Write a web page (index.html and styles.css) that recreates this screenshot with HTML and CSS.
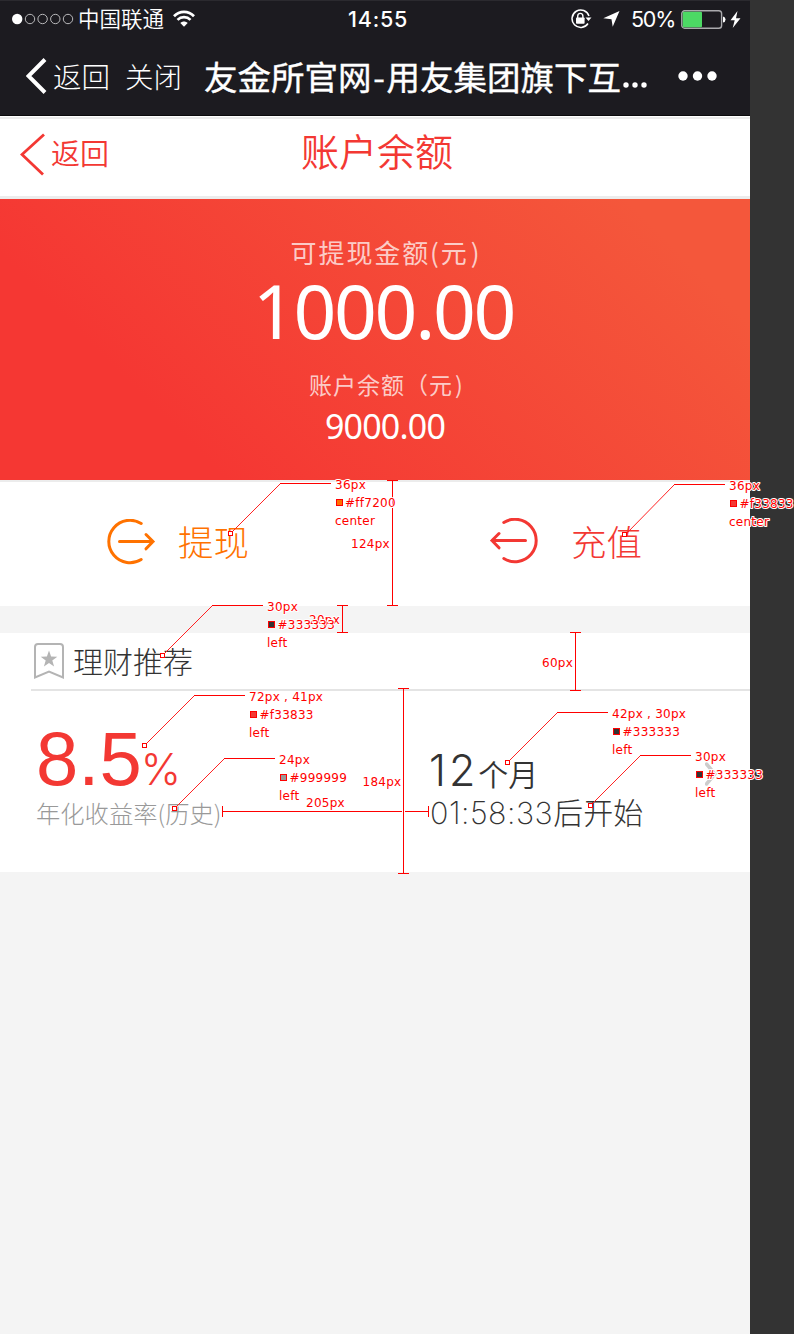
FILE: index.html
```html
<!DOCTYPE html>
<html lang="zh-CN">
<head>
<meta charset="utf-8">
<title>账户余额</title>
<link rel="stylesheet" href="styles.css">
</head>
<body>
<div class="board">
<main class="phone">
  <header class="topbar">
    <div class="status">
      <div class="status-left">
        <svg class="signal" width="62" height="12" viewBox="0 0 62 12"><circle cx="5.2" cy="6" r="5.2" fill="#fff"/><g fill="none" stroke="#b9b9bb" stroke-width="1"><circle cx="18" cy="6" r="4.7"/><circle cx="30.6" cy="6" r="4.7"/><circle cx="43.3" cy="6" r="4.7"/><circle cx="56" cy="6" r="4.7"/></g></svg>
        <span class="carrier">中国联通</span>
        <svg class="wifi" width="22" height="17" viewBox="0 0 22 17"><g fill="none" stroke="#fff" stroke-width="2.7"><path d="M1 6.2C6.5.5 15.500.5 21 6.200"/><path d="M4.500 9.900c3.600-3.600 9.400-3.600 13 0"/></g><path d="M7.300 13c2.200-2 5.200-2 7.400 0L11 16.800z" fill="#fff"/></svg>
      </div>
      <span class="clock">14:55</span>
      <div class="status-right">
        <svg class="lock" width="21" height="20" viewBox="0 0 21 20"><path d="M18 7A8.700 8.700 0 1 0 17 14.500" fill="none" stroke="#fff" stroke-width="1.500"/><path d="M14.500 8.500h6l-3 3.500z" fill="#fff"/><rect x="5" y="8.500" width="8.600" height="6.200" rx=".8" fill="#fff"/><path d="M6.700 9V7.200a2.600 2.800 0 0 1 5.200 0V9" fill="none" stroke="#fff" stroke-width="1.400"/></svg>
        <svg class="locate" width="17" height="16" viewBox="0 0 17 16"><path d="M16.500 0L9.700 15.800 8.500 8.300.300 7.200z" fill="#fff"/></svg>
        <span class="percent">50%</span>
        <svg class="battery" width="45" height="19" viewBox="0 0 45 19"><rect x=".8" y=".8" width="39.800" height="17.400" rx="2.800" fill="none" stroke="#aaaaad" stroke-width="1.400"/><rect x="1.800" y="1.800" width="19.200" height="15.400" rx="1" fill="#4cd964"/><path d="M42 6.500q2.500.5 2.500 3T42 12.500z" fill="#fff"/></svg>
        <svg class="bolt" width="11" height="17" viewBox="0 0 11 17"><path d="M7.500 0L.5 9.200h4.200L2.700 17 10.500 7.200H6z" fill="#fff"/></svg>
      </div>
    </div>
    <nav class="nav">
      <svg class="nav-arrow" width="21" height="36" viewBox="0 0 21 36"><path d="M19 1.500L2.500 18 19 34.500" fill="none" stroke="#fff" stroke-width="4"/></svg>
      <span class="nav-link">返回</span>
      <span class="nav-link nav-close">关闭</span>
      <h1 class="nav-title">友金所官网<i class="dash">-</i>用友集团旗下互</h1>
      <svg class="ellipsis" width="26" height="6" viewBox="0 0 26 6"><g fill="#fff"><circle cx="3" cy="3" r="2.700"/><circle cx="12" cy="3" r="2.700"/><circle cx="21" cy="3" r="2.700"/></g></svg>
      <svg class="more" width="40" height="10" viewBox="0 0 40 10"><g fill="#fff"><circle cx="5" cy="5" r="4.700"/><circle cx="19.500" cy="5" r="4.700"/><circle cx="34" cy="5" r="4.700"/></g></svg>
    </nav>
  </header>

  <section class="titlebar">
    <div class="back"><svg width="26" height="43" viewBox="0 0 26 43"><path d="M24 1.500L2 21.500 23 41.500" fill="none" stroke="#f33833" stroke-width="2.800"/></svg><span>返回</span></div>
    <h2 class="page-title">账户余额</h2>
  </section>

  <section class="balance">
    <p class="cash-label">可提现金额(元<span class="paren">)</span></p>
    <p class="cash-value">1000.00</p>
    <p class="total-label">账户余额（元<span class="paren">)</span></p>
    <p class="total-value">9000.00</p>
  </section>

  <section class="actions">
    <div class="action withdraw"><svg width="49" height="46" viewBox="0 0 49 46"><g fill="none" stroke="currentColor" stroke-width="3" stroke-linecap="round"><path d="M34.200 4.500A21.200 21.200 0 1 0 34.200 40.500"/><path d="M12.500 22.500H46M39 15.500l7 7-7 7.300"/></g></svg><span>提现</span></div>
    <div class="action recharge"><svg width="49" height="46" viewBox="0 0 49 46"><g fill="none" stroke="currentColor" stroke-width="3" stroke-linecap="round"><path d="M14.800 4.500A21.200 21.200 0 1 1 14.800 40.500"/><path d="M36.500 22.500H3M10 15.500l-7 7 7 7.300"/></g></svg><span>充值</span></div>
  </section>

  <section class="recommend">
    <div class="rec-head"><svg width="32" height="38" viewBox="0 0 32 38"><path d="M2 35.500V5q0-3 3-3h22q3 0 3 3v30.500l-14-6z" fill="none" stroke="#b4b4b4" stroke-width="2"/><path d="M16 8.500l2.100 6 6.200.2-5 3.900 1.800 6-5.100-3.500-5.100 3.500 1.800-6-5-3.900 6.200-.2z" fill="#b4b4b4"/></svg><span>理财推荐</span></div>
    <div class="product">
      <div class="rate">
        <p class="rate-value"><span class="rate-number">8.5</span><span class="rate-unit">%</span></p>
        <p class="rate-label">年化收益率(历史)</p>
      </div>
      <div class="term">
        <p class="term-value"><span class="term-number">12</span>个月</p>
        <p class="term-start"><span class="countdown">01:58:33</span>后开始</p>
      </div>
      <svg class="go" width="12" height="24" viewBox="0 0 12 24"><path d="M1.500 2l8.500 10-8.500 10" fill="none" stroke="#ccc" stroke-width="3.500" stroke-linecap="round"/></svg>
    </div>
  </section>
</main>
<svg class="specs" width="794" height="1334" viewBox="0 0 794 1334">
  <g class="leader">
    <path d="M232 532L280 484M627 533L674 485M164 654L212 606M146 744L194 696M176 807L224 759M509 761L557 713M592 804L640 756"/>
  </g>
  <g class="rule">
    <path d="M280 483.500h51M674 484.500h51M212 605.500h51M194 695.500h51M224 758.500h51M557 712.500h51M640 755.500h51"/>
    <path d="M387 480.500h11M387 605.500h11M392.500 480V606M337 605.500h11M337 632.500h11M342.500 605V633M570 632.500h11M570 690.500h11M575.500 632V691M398 688.500h11M398 873.500h11M403.500 688V874"/>
    <path d="M222.500 806v11M428.500 806v11M222 811.500h180M405 811.500h24"/>
  </g>
  <g class="anchor">
    <rect x="228.500" y="531.500" width="4" height="4"/><rect x="622.500" y="532.500" width="4" height="4"/><rect x="160.500" y="653.500" width="4" height="4"/><rect x="142.500" y="743.500" width="4" height="4"/><rect x="172.500" y="806.500" width="4" height="4"/><rect x="505.500" y="760.500" width="4" height="4"/><rect x="588.500" y="803.500" width="4" height="4"/>
  </g>
  <g class="note">
    <text x="351" y="548">124px</text><text x="309" y="624">20px</text><text x="542" y="667">60px</text><text x="362.500" y="786">184px</text><text x="306" y="807">205px</text>
    <text x="335" y="489">36px</text><text x="345" y="507">#ff7200</text><text x="335" y="525">center</text>
    <text x="729" y="490">36px</text><text x="739.500" y="508">#f33833</text><text x="729" y="526">center</text>
    <text x="267" y="611">30px</text><text x="277.500" y="629">#333333</text><text x="267" y="647">left</text>
    <text x="249" y="701">72px , 41px</text><text x="259.500" y="719">#f33833</text><text x="249" y="737">left</text>
    <text x="279" y="764">24px</text><text x="289.500" y="782">#999999</text><text x="279" y="800">left</text>
    <text x="612" y="718">42px , 30px</text><text x="622.500" y="736">#333333</text><text x="612" y="754">left</text>
    <text x="695" y="761">30px</text><text x="705.500" y="779">#333333</text><text x="695" y="797">left</text>
  </g>
  <g class="swatch">
    <rect x="336.500" y="499.500" width="6" height="6" fill="#ff7200"/><rect x="730.500" y="500.500" width="6" height="6" fill="#f33833"/><rect x="268.500" y="621.500" width="6" height="6" fill="#333"/><rect x="250.500" y="711.500" width="6" height="6" fill="#f33833"/><rect x="280.500" y="774.500" width="6" height="6" fill="#999"/><rect x="613.500" y="728.500" width="6" height="6" fill="#333"/><rect x="696.500" y="771.500" width="6" height="6" fill="#333"/>
  </g>
</svg>
</div>
</body>
</html>
```

FILE: styles.css
```css
* { box-sizing: border-box; margin: 0; padding: 0; }
body { background: #333; font-family: "Noto Sans CJK SC", sans-serif; font-weight: 300; }
p, span, h1, h2 { white-space: nowrap; }
svg { display: block; flex: none; }
.board { position: relative; width: 794px; height: 1334px; overflow: hidden; }
.phone { width: 750px; height: 1334px; background: #f4f4f4; }

.topbar { height: 116px; background: #1c1b20; color: #fff; border-top: 1px solid #2b2a2f; border-bottom: 1px solid #0b0b0d; }
.status { height: 34px; display: grid; grid-template-columns: 348px 60px 1fr; align-items: center; }
.status-left { display: flex; align-items: center; padding-left: 12px; }
.carrier { font-size: 21.500px; line-height: 34px; margin: -2px 0 0 4px; font-weight: 350; }
.wifi { margin-left: 9px; margin-top: -1px; }
.clock { font: 500 21.500px/36px Inter, sans-serif; letter-spacing: .8px; }
.status-right { display: flex; align-items: center; padding-left: 163px; }
.locate { margin-left: 11px; }
.percent { font: 400 21.500px/36px Inter, sans-serif; margin-left: 11px; width: 50px; letter-spacing: -1.200px; }
.bolt { margin-left: 4px; }
.nav { height: 80px; display: flex; align-items: center; padding: 1px 0 0 26px; }
.nav-link { font-size: 28.500px; line-height: 78px; margin-left: 6px; }
.nav-close { margin-left: 15px; }
.nav-title { font-size: 33.500px; line-height: 76px; font-weight: 400; -webkit-text-stroke: .4px #fff; margin: 1px 0 0 22px; width: 419px; }
.dash { font-style: normal; display: inline-block; width: 15px; text-align: center; }
.ellipsis { margin-top: 18px; }
.more { margin-left: 29px; }

.titlebar { height: 83px; background: #fff; border-top: 1px solid #fff; border-bottom: 3px solid #ececec; box-shadow: inset 0 2px #ececec; color: #f33833; display: grid; grid-template-columns: 301px 1fr; }
.back { display: flex; align-items: center; padding: 0 0 5px 20px; }
.back span { font-size: 29px; line-height: 60px; margin: -5px 0 0 5px; font-weight: 350; }
.page-title { font-size: 38px; line-height: 66px; font-weight: 350; }

.balance { height: 281px; background: linear-gradient(45deg, #f53733 22%, #f4573b 88%); color: #fff; text-align: center; padding: 35px 0 0 20px; }
.cash-label { font-size: 26px; line-height: 36px; letter-spacing: 1.900px; font-weight: 400; color: rgba(255,255,255,.74); padding-left: 2px; }
.paren { margin-left: 2px; }
.cash-value { font: 400 75px/80px "Noto Sans", sans-serif; letter-spacing: -2.300px; height: 83px; padding-right: 3px; }
.total-label { font-size: 23px; line-height: 34px; margin-top: 14px; letter-spacing: 1px; font-weight: 400; color: rgba(255,255,255,.74); padding-left: 3px; }
.total-value { font: 400 34px/44px "Noto Sans", sans-serif; letter-spacing: -.8px; margin-top: 3px; }

.actions { height: 126px; background: #fff; border-top: 2px solid #ececec; display: grid; grid-template-columns: 382px 1fr; }
.action { display: flex; align-items: center; height: 119px; padding-left: 106.500px; font-size: 35.500px; }
.action span { margin: -2px 0 0 22.500px; }
.withdraw { color: #ff7200; }
.recharge { color: #f33833; padding-bottom: 2px; }
.recharge span { margin: 0 0 0 33.500px; }

.recommend { margin-top: 27px; height: 239px; background: #fff; padding-left: 31px; color: #333; }
.rec-head { height: 58px; border-bottom: 2px solid #e4e4e4; display: flex; align-items: center; padding-left: 2px; }
.rec-head span { font-size: 30px; line-height: 54px; margin: -3px 0 0 8px; }
.product { display: grid; grid-template-columns: 398px 276px 12px; align-items: start; }
.rate { padding: 25px 0 0 5px; }
.rate-value { height: 80px; line-height: 86px; color: #f33833; display: flex; align-items: baseline; }
.rate-number { font: 400 76px/86px "Liberation Sans", sans-serif; }
.rate-unit { font: 300 43px/60px Inter, sans-serif; margin-left: -1px; }
.rate-label { font-size: 24.300px; line-height: 34px; color: #999; }
.term { padding-top: 52px; }
.term-value { font-size: 30px; height: 48px; line-height: 54px; font-weight: 350; }
.term-number { font: 350 43px/54px Inter, sans-serif; letter-spacing: 3px; }
.term-start { font-size: 30px; line-height: 40px; height: 40px; padding-left: 1px; }
.countdown { font: 250 30.500px/40px Inter, sans-serif; letter-spacing: .5px; }
.go { margin-top: 71px; }

.specs { position: absolute; left: 0; top: 0; }
.rule { stroke: #f00; fill: none; shape-rendering: crispEdges; }
.leader { stroke: #f22; fill: none; stroke-width: 1; }
.anchor { fill: #fff; stroke: #f00; }
.note { font: 400 12px "DejaVu Sans", sans-serif; letter-spacing: .25px; fill: #f00; stroke: #fff; stroke-width: 2px; paint-order: stroke; stroke-linejoin: round; }
.swatch { stroke: #f00; shape-rendering: crispEdges; }
```
